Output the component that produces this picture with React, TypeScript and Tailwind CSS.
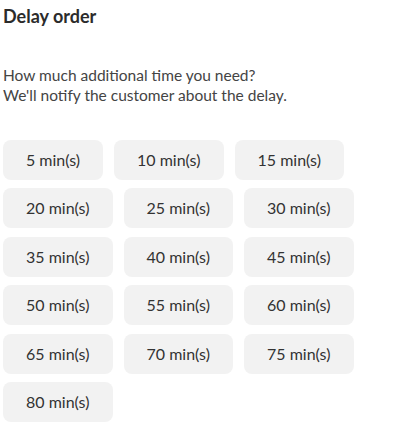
import React from "react";

const options = [5, 10, 15, 20, 25, 30, 35, 40, 45, 50, 55, 60, 65, 70, 75, 80];

export default function App() {
  return (
    <div
      className="w-[406px] h-[436px] bg-white px-[3px] pt-[4px] text-[#333333]"
      style={{ fontFamily: '"Lato", "Noto Sans", sans-serif' }}
    >
      <h1 className="text-[18px] leading-[24px] font-bold text-[#2b2b2b]">Delay order</h1>
      <p className="mt-[37px] text-[15.5px] leading-[20px] text-[#444444]">
        How much additional time you need?
        <br />
        We'll notify the customer about the delay.
      </p>
      <div className="mt-[35px] flex flex-wrap gap-x-[11px] gap-y-[8.4px]">
        {options.map((m) => (
          <button
            key={m}
            className={`${m === 5 ? "w-[100px]" : "w-[109.5px]"} h-[40px] rounded-[8px] bg-[#f2f2f2] text-[16px] text-[#333333] flex items-center justify-center`}
          >
            {m} min(s)
          </button>
        ))}
      </div>
    </div>
  );
}
